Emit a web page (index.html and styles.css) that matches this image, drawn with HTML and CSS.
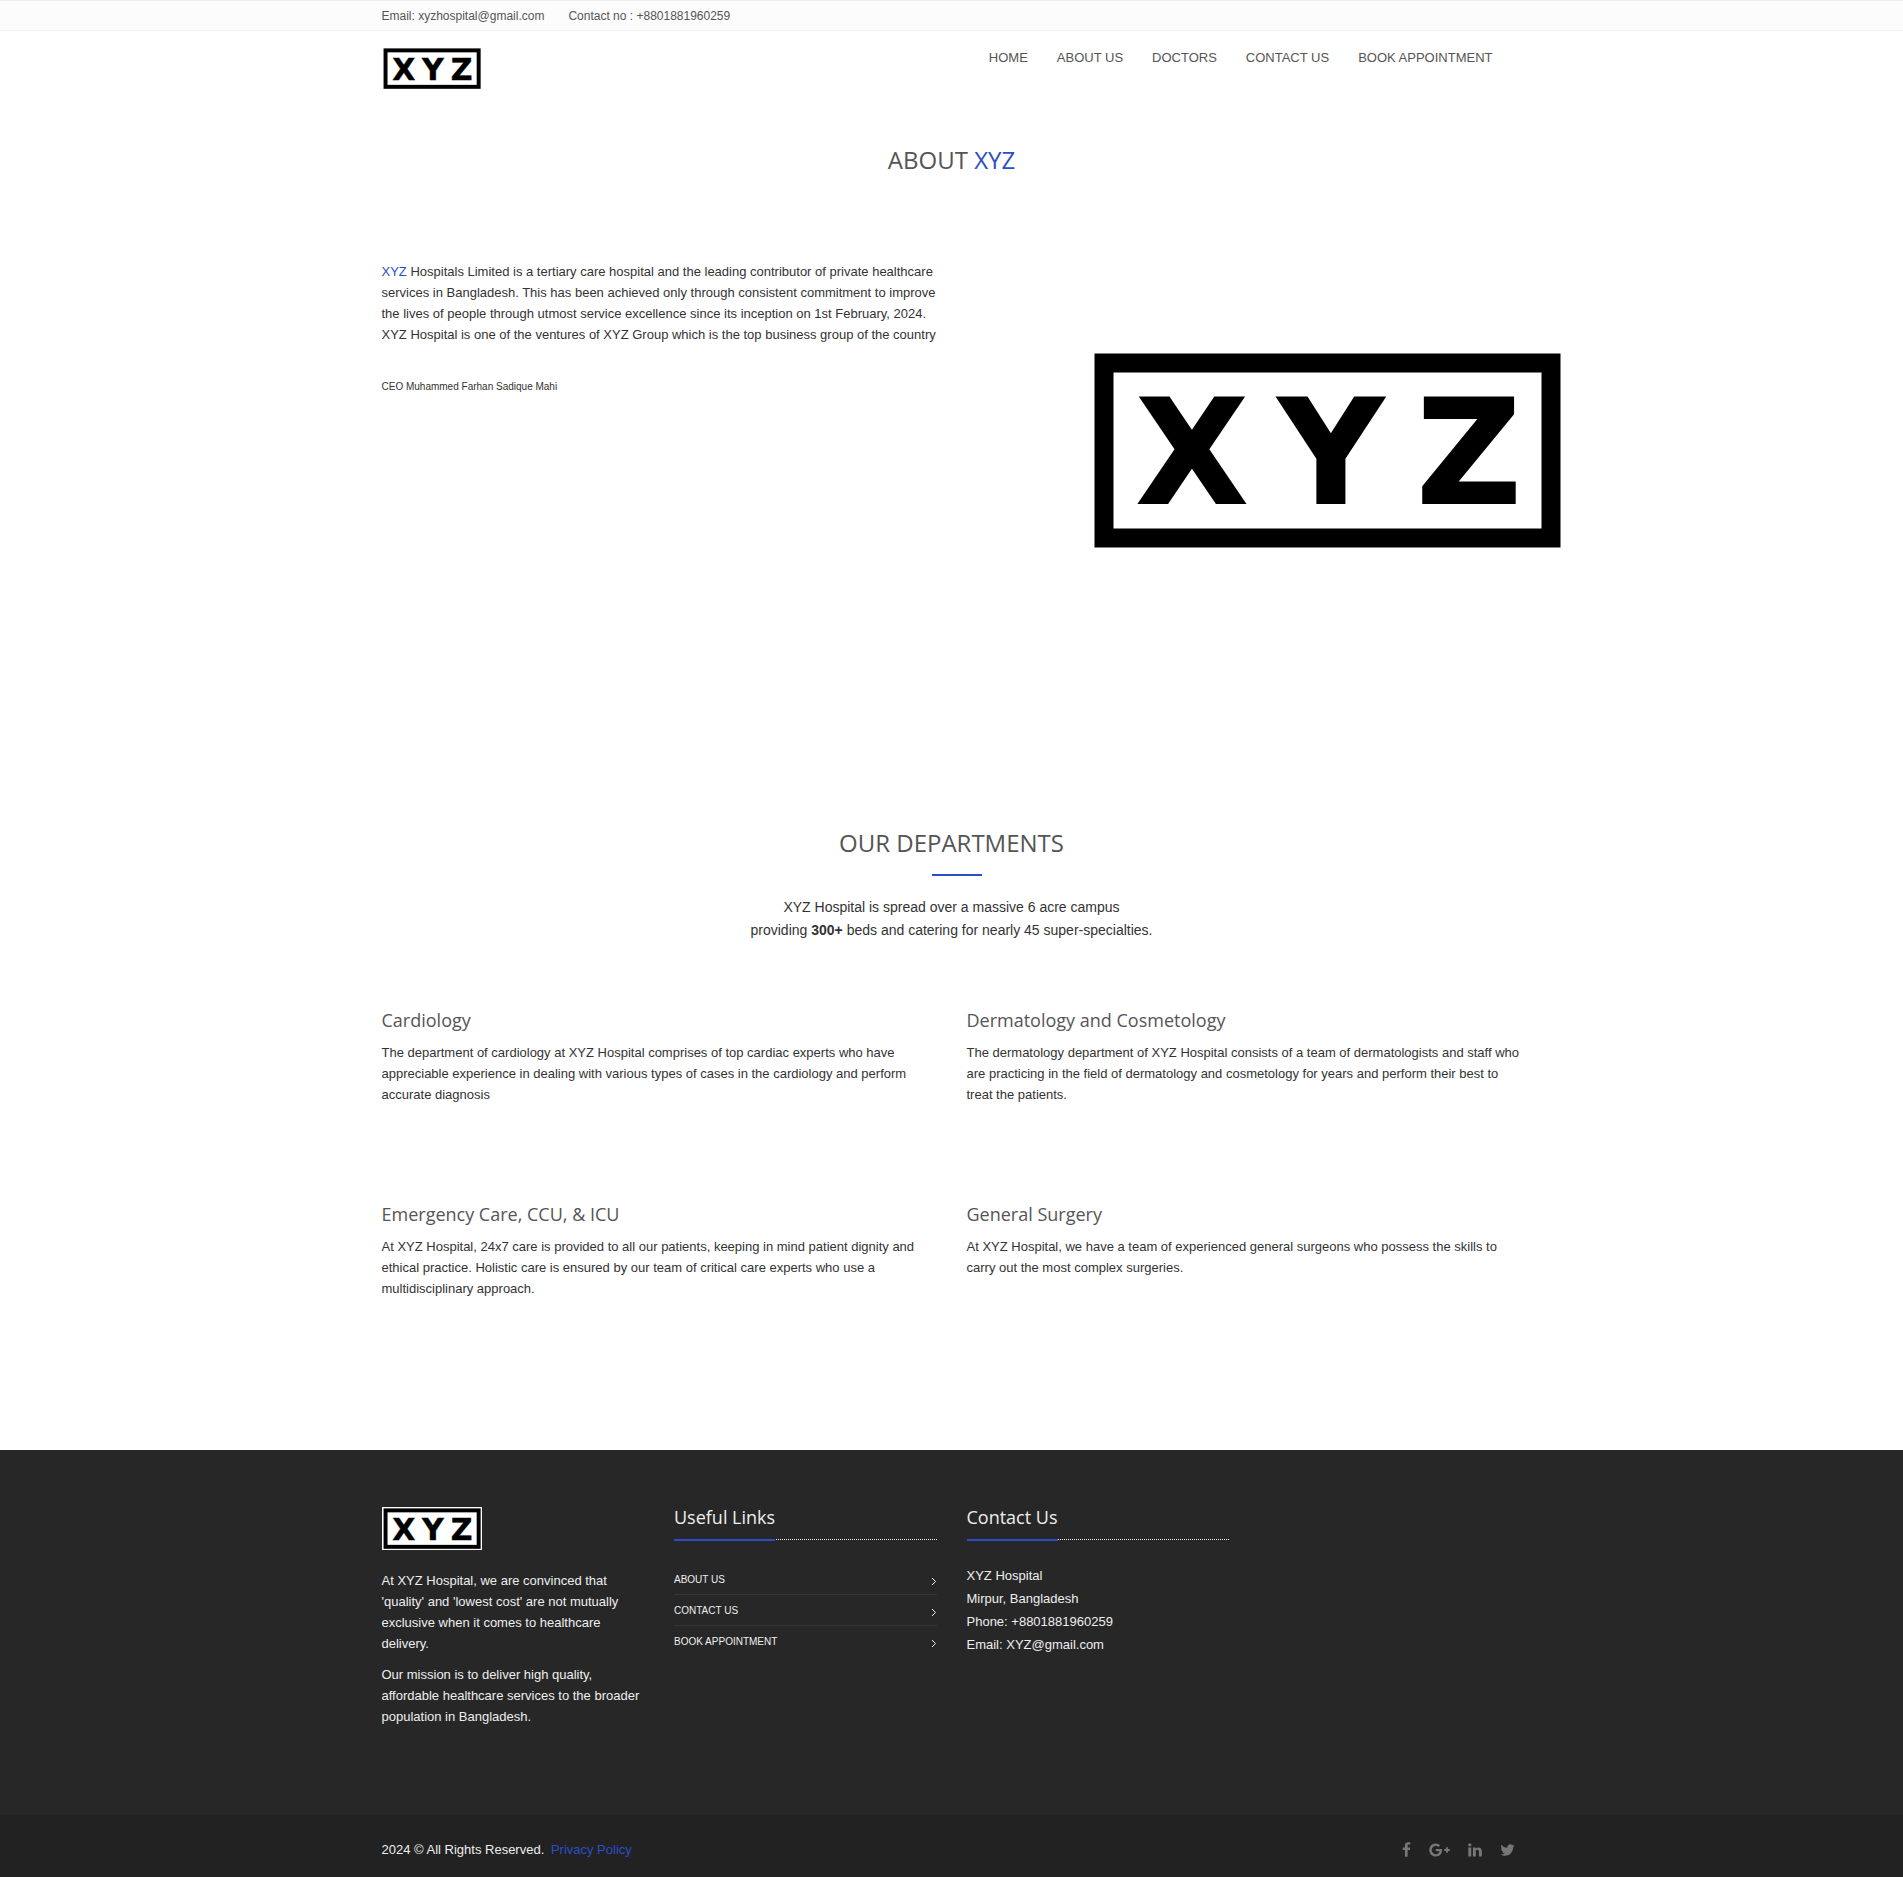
FILE: index.html
```html
<!DOCTYPE html>
<html lang="en">
<head>
<meta charset="utf-8">
<meta name="viewport" content="width=device-width, initial-scale=1">
<title>XYZ Hospital</title>
<link rel="stylesheet" href="styles.css">
</head>
<body>
<div class="topbar">
  <div class="container topbar-list">
    <span>Email: xyzhospital@gmail.com</span>
    <span>Contact no : +8801881960259</span>
  </div>
</div>

<header class="container header">
  <a href="#" aria-label="XYZ home">
    <svg class="logo logo-small" viewBox="0 0 480 206">
      <rect width="480" height="206" fill="#fff"/>
      <rect x="17" y="16" width="447" height="175" fill="#fff" stroke="#000" stroke-width="19"/>
      <text x="105" y="156">X</text><text x="244" y="156">Y</text><text x="382" y="156">Z</text>
    </svg>
  </a>
  <nav class="nav">
    <a href="#">HOME</a>
    <a href="#about">ABOUT US</a>
    <a href="#">DOCTORS</a>
    <a href="#contact">CONTACT US</a>
    <a href="#">BOOK APPOINTMENT</a>
  </nav>
</header>

<main class="container">
  <section id="about">
    <h1 class="title">ABOUT <span class="accent">XYZ</span></h1>
    <div class="two-col about">
      <div>
        <p><span class="accent">XYZ</span> Hospitals Limited is a tertiary care hospital and the leading contributor of private healthcare services in Bangladesh. This has been achieved only through consistent commitment to improve the lives of people through utmost service excellence since its inception on 1st February, 2024. XYZ Hospital is one of the ventures of XYZ Group which is the top business group of the country</p>
        <p class="ceo">CEO Muhammed Farhan Sadique Mahi</p>
      </div>
      <svg class="logo logo-large" viewBox="0 0 480 206" role="img" aria-label="XYZ">
        <rect width="480" height="206" fill="#fff"/>
        <rect x="17" y="16" width="447" height="175" fill="#fff" stroke="#000" stroke-width="19"/>
        <text x="105" y="156">X</text><text x="244" y="156">Y</text><text x="382" y="156">Z</text>
      </svg>
    </div>
  </section>

  <section>
    <h2 class="title title-ruled">OUR DEPARTMENTS</h2>
    <p class="intro">XYZ Hospital is spread over a massive 6 acre campus<br>providing <strong>300+</strong> beds and catering for nearly 45 super-specialties.</p>
    <div class="two-col departments">
      <article>
        <h3>Cardiology</h3>
        <p>The department of cardiology at XYZ Hospital comprises of top cardiac experts who have appreciable experience in dealing with various types of cases in the cardiology and perform accurate diagnosis</p>
      </article>
      <article>
        <h3>Dermatology and Cosmetology</h3>
        <p>The dermatology department of XYZ Hospital consists of a team of dermatologists and staff who are practicing in the field of dermatology and cosmetology for years and perform their best to treat the patients.</p>
      </article>
      <article>
        <h3>Emergency Care, CCU, &amp; ICU</h3>
        <p>At XYZ Hospital, 24x7 care is provided to all our patients, keeping in mind patient dignity and ethical practice. Holistic care is ensured by our team of critical care experts who use a multidisciplinary approach.</p>
      </article>
      <article>
        <h3>General Surgery</h3>
        <p>At XYZ Hospital, we have a team of experienced general surgeons who possess the skills to carry out the most complex surgeries.</p>
      </article>
    </div>
  </section>
</main>

<footer>
  <div class="footer">
    <div class="container footer-cols">
      <div>
        <svg class="logo logo-small" viewBox="0 0 480 206" role="img" aria-label="XYZ">
          <rect width="480" height="206" fill="#fff"/>
          <rect x="17" y="16" width="447" height="175" fill="#fff" stroke="#000" stroke-width="19"/>
          <text x="105" y="156">X</text><text x="244" y="156">Y</text><text x="382" y="156">Z</text>
        </svg>
        <div class="mission">
          <p>At XYZ Hospital, we are convinced that 'quality' and 'lowest cost' are not mutually exclusive when it comes to healthcare delivery.</p>
          <p>Our mission is to deliver high quality, affordable healthcare services to the broader population in Bangladesh.</p>
        </div>
      </div>
      <div>
        <div class="headline"><h2>Useful Links</h2></div>
        <ul class="links">
          <li><a href="#about">ABOUT US<svg viewBox="0 0 6 9"><path d="M1 1l3.500 3.500L1 8"/></svg></a></li>
          <li><a href="#contact">CONTACT US<svg viewBox="0 0 6 9"><path d="M1 1l3.500 3.500L1 8"/></svg></a></li>
          <li><a href="#">BOOK APPOINTMENT<svg viewBox="0 0 6 9"><path d="M1 1l3.500 3.500L1 8"/></svg></a></li>
        </ul>
      </div>
      <div id="contact">
        <div class="headline"><h2>Contact Us</h2></div>
        <address>XYZ Hospital<br>Mirpur, Bangladesh<br>Phone: +8801881960259<br>Email: XYZ@gmail.com</address>
      </div>
    </div>
  </div>
  <div class="copyright">
    <div class="container copyright-row">
      <p>2024 © All Rights Reserved. <a href="#">Privacy Policy</a></p>
      <div class="social">
        <a href="#" aria-label="Facebook"><svg width="9" height="16" viewBox="399 0 1024 1792"><path d="M1343 12v264h-157q-86 0-116 36t-30 108v189h293l-39 296h-254v759h-306v-759h-255v-296h255v-218q0-186 104-288.500t277-102.500q147 0 228 12z"/></svg></a>
        <a href="#" aria-label="Google Plus"><svg width="21" height="16" viewBox="-256 0 2304 1792"><path d="M1181 913q0 208-87 370.500t-248 254-369 91.500q-149 0-285-58t-234-156-156-234-58-285 58-285 156-234 234-156 285-58q286 0 491 192l-199 191q-117-113-292-113-123 0-227.500 62t-165.500 168.500-61 232.500 61 232.500 165.500 168.500 227.500 62q83 0 152.500-23t114.500-57.500 78.500-78.500 49-83 21.500-74h-416v-252h692q12 63 12 122zm867-122v210h-209v209h-210v-209h-209v-210h209v-209h210v209h209z"/></svg></a>
        <a href="#" aria-label="LinkedIn"><svg width="14" height="16" viewBox="128 0 1536 1792"><path d="M477 625v991h-330v-991h330zm21-306q1 73-50.500 122t-135.500 49h-2q-82 0-132-49t-50-122q0-74 51.500-122.500t134.500-48.500 133 48.500 51 122.500zm1166 729v568h-329v-530q0-105-40.500-164.500t-126.500-59.500q-63 0-105.500 34.500t-63.500 85.500q-11 30-11 81v553h-329q2-399 2-647t-1-296l-1-48h329v144h-2q20-32 41-56t56.500-52 87-43.500 114.500-15.500q171 0 275 113.500t104 332.500z"/></svg></a>
        <a href="#" aria-label="Twitter"><svg width="15" height="16" viewBox="64 0 1664 1792"><path d="M1684 408q-67 98-162 167 1 14 1 42 0 130-38 259.500t-115.500 248.500-184.500 210.500-258 146-323 54.500q-271 0-496-145 35 4 78 4 225 0 401-138-105-2-188-64.500t-114-159.500q33 5 61 5 43 0 85-11-112-23-185.500-111.500t-73.500-205.500v-4q68 38 146 41-66-44-105-115t-39-154q0-88 44-163 121 149 294.500 238.500t371.500 99.500q-8-38-8-74 0-134 94.500-228.500t228.500-94.500q140 0 236 102 109-21 205-78-37 115-142 178 93-10 186-50z"/></svg></a>
      </div>
    </div>
  </div>
</footer>
</body>
</html>
```
FILE: styles.css
```css
* { box-sizing: border-box; }

body {
  margin: 0;
  background: #fff;
  color: #333;
  font: 13px/21px "Liberation Sans", Arial, sans-serif;
}

h1, h2, h3, p, ul { margin: 0; font-weight: 400; }
a { color: inherit; text-decoration: none; }
svg { display: block; }

.container {
  max-width: 1170px;
  margin: 0 auto;
  padding: 0 15px;
}

.accent { color: #2a4fc4; }

.logo text {
  font: 700 144px "DejaVu Sans", sans-serif;
  fill: #000;
  stroke: #000;
  stroke-width: 2px;
  text-anchor: middle;
}
.logo-small { width: 100px; height: 43px; }
.logo-large { width: 480px; height: 206px; }

/* Top bar */
.topbar {
  padding-top: 1px;
  background: #fcfcfc;
  border-top: 1px solid #eee;
  border-bottom: 1px solid #eee;
  color: #555;
  font-size: 12px;
  line-height: 28px;
}
.topbar-list { display: flex; gap: 24px; }

/* Header */
.header {
  display: flex;
  justify-content: space-between;
  align-items: flex-start;
  padding-top: 16px;
}
.nav {
  display: flex;
  gap: 29px;
  padding-right: 29px;
  color: #555;
}

/* Sections */
.title {
  font: 24px/33px "Open Sans", sans-serif;
  color: #555;
  text-align: center;
}
#about .title { padding-top: 53px; }
.title-ruled::after {
  content: "";
  display: block;
  width: 50px;
  height: 2px;
  margin: 15px 0 0 calc(50% - 20px);
  background: #2a4fc4;
}
.two-col {
  display: grid;
  grid-template-columns: repeat(2, minmax(0, 1fr));
  column-gap: 30px;
}
.about {
  padding-top: 85px;
  min-height: 564px;
}
.about .logo-large { margin: 86px 0 0 120px; }
.ceo {
  margin-top: 31px;
  font-size: 10px;
}
#about + section { padding-top: 86px; }
.intro {
  margin-top: 20px;
  font-size: 14px;
  line-height: 23px;
  text-align: center;
}
.departments {
  padding: 65px 0 139px;
  row-gap: 84px;
}
.departments article { min-height: 110px; }
.departments h3 {
  margin-bottom: 9px;
  font: 18px/26px "Open Sans", sans-serif;
  color: #555;
}

/* Footer */
.footer {
  padding: 57px 0 88px;
  background: #272727;
  color: #eee;
}
.footer-cols {
  display: grid;
  grid-template-columns: repeat(4, minmax(0, 1fr));
  column-gap: 30px;
}
.mission {
  display: grid;
  gap: 10px;
  margin-top: 20px;
}
.headline {
  margin-bottom: 24px;
  border-bottom: 1px dotted #eee;
}
.headline h2 {
  display: inline-block;
  margin-bottom: -2px;
  padding-bottom: 12px;
  border-bottom: 2px solid #2a4fc4;
  font: 18px/20px "Open Sans", sans-serif;
  vertical-align: top;
}
.links {
  padding: 0;
  list-style: none;
  font-size: 10px;
}
.links a {
  display: flex;
  justify-content: space-between;
  align-items: center;
  padding: 5px 0 4px;
}
.links li + li { border-top: 1px solid #353535; }
.links svg {
  width: 6px;
  height: 9px;
  margin-top: 3px;
  fill: none;
  stroke: currentColor;
}
address {
  font-style: normal;
  line-height: 23px;
}
.copyright {
  padding: 24px 0 18px;
  background: #222;
  color: #eee;
}
.copyright-row {
  display: flex;
  justify-content: space-between;
}
.copyright p a { margin-left: 3px; color: #2a4fc4; }
.social {
  display: flex;
  gap: 18px;
  padding: 3px 7px 0 0;
  fill: #777;
}
```
